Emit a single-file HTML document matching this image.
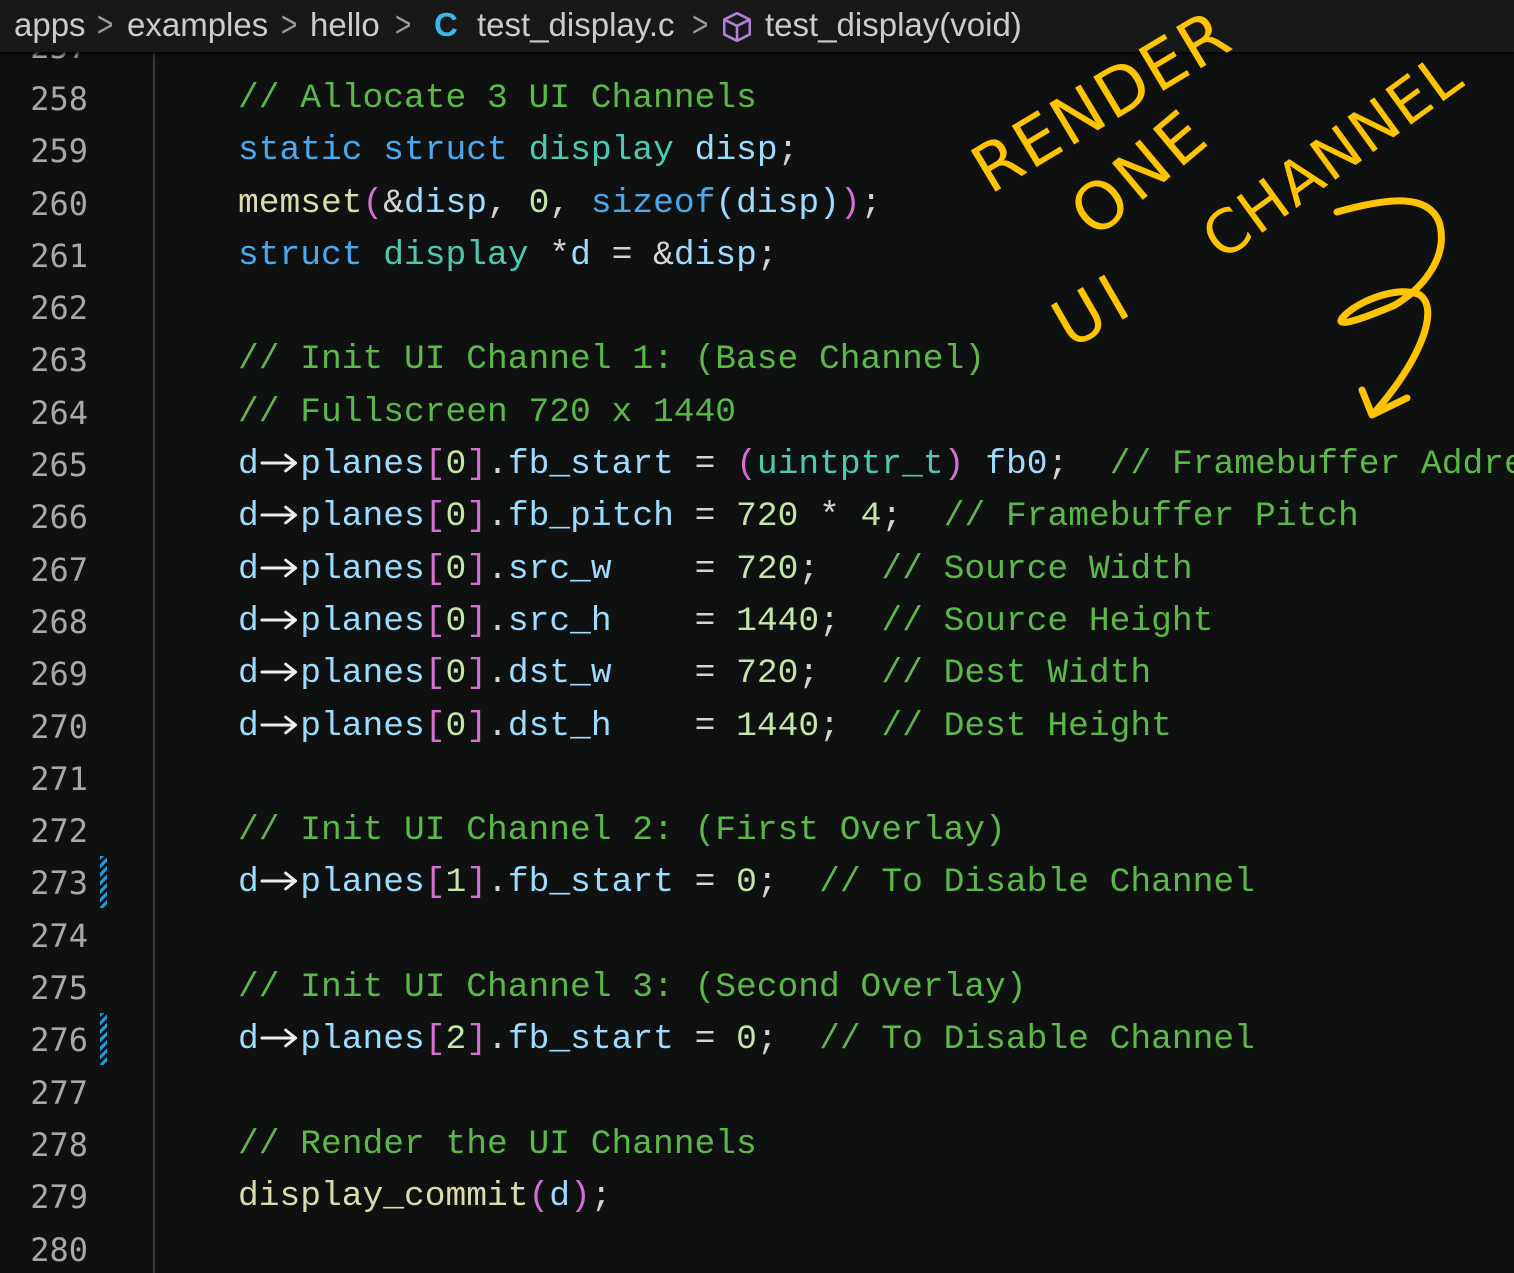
<!DOCTYPE html>
<html><head><meta charset="utf-8"><style>
html,body{margin:0;padding:0;background:#0f1010;width:1514px;height:1273px;overflow:hidden;position:relative}
#hdr{position:absolute;left:0;top:0;width:1514px;height:52px;background:#181818;box-shadow:0 2px 4px #000;z-index:5;font-family:"Liberation Sans",sans-serif;font-size:33px;color:#cccccc;line-height:50px;white-space:pre}
#hdr span{position:absolute;top:0}
#hdr .s{color:#999;font-size:28px;transform:scaleY(1.3)}
#gut{position:absolute;left:0;top:20.7px;width:88px;font-family:"DejaVu Sans Mono","Liberation Mono",monospace;font-size:32px;color:#a8a8a8;text-align:right;line-height:52.3px}
#div{position:absolute;left:153px;top:52px;width:2px;height:1221px;background:#3a3a3a}
#code{position:absolute;left:238px;top:20.7px;font-family:"Liberation Mono",monospace;font-size:34.6px;line-height:52.3px;color:#d4d4d4;white-space:pre}
.c{color:#5cb848}.k{color:#4aaaf0}.t{color:#4ec9b0}.v{color:#9cdcfe}.f{color:#dcdcaa}.n{color:#c5e6a8}.p{color:#d670d6}
.w{display:inline-block;width:2ch;height:20px;vertical-align:0}
.mk{position:absolute;left:100px;width:7px;height:52px;background:repeating-linear-gradient(135deg,#1e9be0 0 3px,transparent 3px 6px)}
</style></head><body>
<div id="hdr"><span style="left:14px">apps</span><span class="s" style="left:97px">&gt;</span><span style="left:127px">examples</span><span class="s" style="left:281px">&gt;</span><span style="left:310px">hello</span><span class="s" style="left:395px">&gt;</span><span style="left:434px;color:#3fb5ec;font-weight:bold">C</span><span style="left:477px">test_display.c</span><span class="s" style="left:692px">&gt;</span><span style="left:720px;top:8px"><svg width="34" height="34" viewBox="0 0 32 32"><path d="M16 3 L28 9 L28 23 L16 29 L4 23 L4 9 Z M4 9 L16 15 L28 9 M16 15 L16 29" fill="none" stroke="#b180d7" stroke-width="2.4" stroke-linejoin="round"/></svg></span><span style="left:765px">test_display(void)</span></div>
<div id="gut">257<br>258<br>259<br>260<br>261<br>262<br>263<br>264<br>265<br>266<br>267<br>268<br>269<br>270<br>271<br>272<br>273<br>274<br>275<br>276<br>277<br>278<br>279<br>280</div>
<div class="mk" style="top:856px"></div>
<div class="mk" style="top:1013px"></div>
<div id="div"></div>
<svg width="0" height="0" style="position:absolute"><defs><symbol id="ar" viewBox="0 0 42 20"><path d="M3 10 H37 M27 2 L37 10 L27 18" fill="none" stroke="#eeeeee" stroke-width="3" stroke-linecap="round" stroke-linejoin="round"/></symbol></defs></svg>
<div id="code">
<span class="c">// Allocate 3 UI Channels</span>
<span class="k">static</span> <span class="k">struct</span> <span class="t">display</span> <span class="v">disp</span>;
<span class="f">memset</span><span class="p">(</span>&amp;<span class="v">disp</span>, <span class="n">0</span>, <span class="k">sizeof</span><span class="v">(</span><span class="v">disp</span><span class="v">)</span><span class="p">)</span>;
<span class="k">struct</span> <span class="t">display</span> *<span class="v">d</span> = &amp;<span class="v">disp</span>;

<span class="c">// Init UI Channel 1: (Base Channel)</span>
<span class="c">// Fullscreen 720 x 1440</span>
<span class="v">d</span><svg class="w"><use href="#ar"/></svg><span class="v">planes</span><span class="p">[</span><span class="n">0</span><span class="p">]</span>.<span class="v">fb_start</span> = <span class="p">(</span><span class="t">uintptr_t</span><span class="p">)</span> <span class="v">fb0</span>;  <span class="c">// Framebuffer Address</span>
<span class="v">d</span><svg class="w"><use href="#ar"/></svg><span class="v">planes</span><span class="p">[</span><span class="n">0</span><span class="p">]</span>.<span class="v">fb_pitch</span> = <span class="n">720</span> * <span class="n">4</span>;  <span class="c">// Framebuffer Pitch</span>
<span class="v">d</span><svg class="w"><use href="#ar"/></svg><span class="v">planes</span><span class="p">[</span><span class="n">0</span><span class="p">]</span>.<span class="v">src_w</span>    = <span class="n">720</span>;   <span class="c">// Source Width</span>
<span class="v">d</span><svg class="w"><use href="#ar"/></svg><span class="v">planes</span><span class="p">[</span><span class="n">0</span><span class="p">]</span>.<span class="v">src_h</span>    = <span class="n">1440</span>;  <span class="c">// Source Height</span>
<span class="v">d</span><svg class="w"><use href="#ar"/></svg><span class="v">planes</span><span class="p">[</span><span class="n">0</span><span class="p">]</span>.<span class="v">dst_w</span>    = <span class="n">720</span>;   <span class="c">// Dest Width</span>
<span class="v">d</span><svg class="w"><use href="#ar"/></svg><span class="v">planes</span><span class="p">[</span><span class="n">0</span><span class="p">]</span>.<span class="v">dst_h</span>    = <span class="n">1440</span>;  <span class="c">// Dest Height</span>

<span class="c">// Init UI Channel 2: (First Overlay)</span>
<span class="v">d</span><svg class="w"><use href="#ar"/></svg><span class="v">planes</span><span class="p">[</span><span class="n">1</span><span class="p">]</span>.<span class="v">fb_start</span> = <span class="n">0</span>;  <span class="c">// To Disable Channel</span>

<span class="c">// Init UI Channel 3: (Second Overlay)</span>
<span class="v">d</span><svg class="w"><use href="#ar"/></svg><span class="v">planes</span><span class="p">[</span><span class="n">2</span><span class="p">]</span>.<span class="v">fb_start</span> = <span class="n">0</span>;  <span class="c">// To Disable Channel</span>

<span class="c">// Render the UI Channels</span>
<span class="f">display_commit</span><span class="p">(</span><span class="v">d</span><span class="p">)</span>;
</div>
<svg style="position:absolute;left:0;top:0;z-index:6" width="1514" height="1273">
<g fill="#ffc400" font-family="DejaVu Sans,sans-serif" font-size="66">
<text transform="translate(990,195) rotate(-31)" letter-spacing="2">RENDER</text>
<text transform="translate(1095,240) rotate(-40)" letter-spacing="4">ONE</text>
<text transform="translate(1070,350) rotate(-30)" letter-spacing="6">UI</text>
<text transform="translate(1222,262) rotate(-36)" font-size="60" letter-spacing="2">CHANNEL</text>
</g>
<path d="M1337 212 C1380 200 1430 190 1440 225 C1448 260 1420 290 1395 305 C1360 320 1330 330 1345 315 C1360 300 1400 285 1420 295 C1440 310 1420 360 1375 412 M1362 390 L1372 415 L1407 398" fill="none" stroke="#ffc400" stroke-width="7" stroke-linecap="round" stroke-linejoin="round"/>
</svg>
</body></html>
